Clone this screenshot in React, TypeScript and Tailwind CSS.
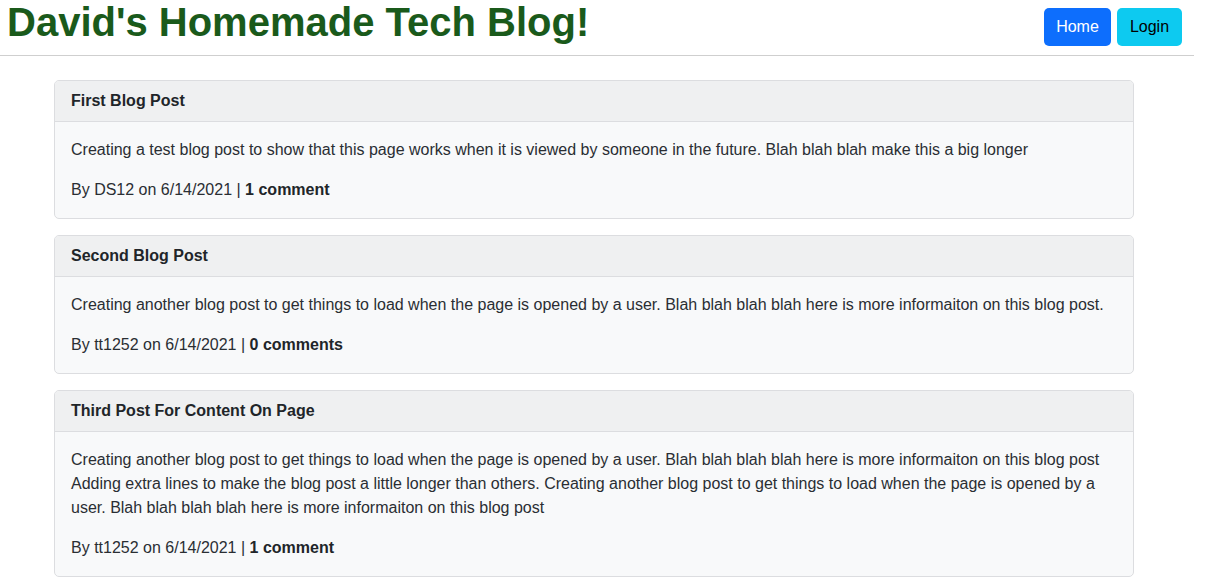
import React from 'react';

interface Post {
  title: string;
  body: string;
  author: string;
  date: string;
  comments: number;
}

const posts: Post[] = [
  {
    title: 'First Blog Post',
    body: 'Creating a test blog post to show that this page works when it is viewed by someone in the future. Blah blah blah make this a big longer',
    author: 'DS12',
    date: '6/14/2021',
    comments: 1,
  },
  {
    title: 'Second Blog Post',
    body: 'Creating another blog post to get things to load when the page is opened by a user. Blah blah blah blah here is more informaiton on this blog post.',
    author: 'tt1252',
    date: '6/14/2021',
    comments: 0,
  },
  {
    title: 'Third Post For Content On Page',
    body: 'Creating another blog post to get things to load when the page is opened by a user. Blah blah blah blah here is more informaiton on this blog post Adding extra lines to make the blog post a little longer than others. Creating another blog post to get things to load when the page is opened by a user. Blah blah blah blah here is more informaiton on this blog post',
    author: 'tt1252',
    date: '6/14/2021',
    comments: 1,
  },
];

const PostCard: React.FC<{ post: Post }> = ({ post }) => (
  <div className="rounded-[5px] border border-[#dcdde0] bg-[#f8f9fa] overflow-hidden">
    <div className="border-b border-[#dcdde0] bg-[#eff0f1] px-4 py-2 leading-6 font-bold text-[#212529]">
      {post.title}
    </div>
    <div className="p-4 leading-6 text-[#2a2e33]">
      <p className="mb-4">{post.body}</p>
      <p>
        By {post.author} on {post.date} |{' '}
        <span className="font-bold text-[#212529]">
          {post.comments} {post.comments === 1 ? 'comment' : 'comments'}
        </span>
      </p>
    </div>
  </div>
);

const App: React.FC = () => {
  return (
    <div className="min-h-[577px] bg-white font-['Liberation_Sans',Arial,sans-serif] text-base">
      <header className="flex h-14 w-[1194px] items-start justify-between border-b border-[#cfcfcf] pl-[7px] pr-3">
        <h1 className="text-[40px] leading-[44px] font-bold text-[#1a5a1b]">
          David's Homemade Tech Blog!
        </h1>
        <div className="mt-2 flex gap-1.5">
          <button className="h-[38px] w-[67px] rounded-[5px] bg-[#0d6efd] text-white leading-6">
            Home
          </button>
          <button className="h-[38px] w-[65px] rounded-[5px] bg-[#0dcaf0] text-black leading-6">
            Login
          </button>
        </div>
      </header>

      <main className="ml-[54px] mt-6 flex w-[1080px] flex-col gap-4">
        {posts.map((post, i) => (
          <PostCard key={i} post={post} />
        ))}
      </main>
    </div>
  );
};

export default App;
